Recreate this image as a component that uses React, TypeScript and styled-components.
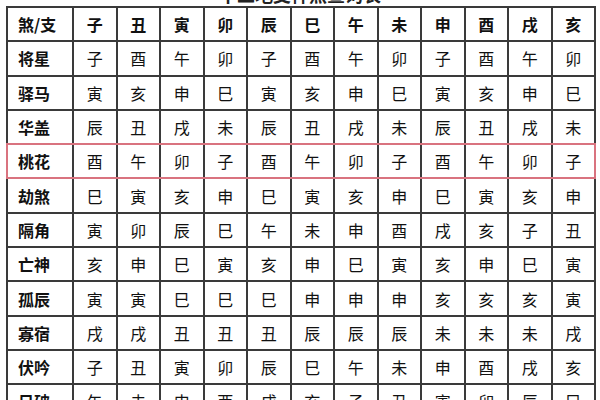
import styled, { createGlobalStyle } from "styled-components";

const branches = ["子", "丑", "寅", "卯", "辰", "巳", "午", "未", "申", "酉", "戌", "亥"];

interface ShaRow {
  name: string;
  values: string;
  highlight?: boolean;
}

const rows: ShaRow[] = [
  { name: "将星", values: "子酉午卯子酉午卯子酉午卯" },
  { name: "驿马", values: "寅亥申巳寅亥申巳寅亥申巳" },
  { name: "华盖", values: "辰丑戌未辰丑戌未辰丑戌未" },
  { name: "桃花", values: "酉午卯子酉午卯子酉午卯子", highlight: true },
  { name: "劫煞", values: "巳寅亥申巳寅亥申巳寅亥申" },
  { name: "隔角", values: "寅卯辰巳午未申酉戌亥子丑" },
  { name: "亡神", values: "亥申巳寅亥申巳寅亥申巳寅" },
  { name: "孤辰", values: "寅寅巳巳巳申申申亥亥亥寅" },
  { name: "寡宿", values: "戌戌丑丑丑辰辰辰未未未戌" },
  { name: "伏吟", values: "子丑寅卯辰巳午未申酉戌亥" },
  { name: "日破", values: "午未申酉戌亥子丑寅卯辰巳" },
];

const GlobalStyle = createGlobalStyle`
  html, body {
    margin: 0;
    padding: 0;
    background: #ffffff;
    overflow: hidden;
  }
  body {
    font-family: "Noto Sans CJK SC", "Noto Sans", sans-serif;
    color: #111111;
  }
`;

const Page = styled.div`
  width: 600px;
  height: 400px;
  overflow: hidden;
`;

/* only the lower edge of the caption is left in the crop */
const Title = styled.h1`
  margin: -15px 0 0;
  height: 18px;
  font-size: 18px;
  line-height: 18px;
  font-weight: 700;
  text-align: center;
  color: #222222;
`;

const Table = styled.div`
  margin: 3px 0 0 6px;
  width: 588px;
  border-top: 2px solid #3a3a3a;
  border-left: 2px solid #3a3a3a;
`;

const Row = styled.div<{ $highlight?: boolean }>`
  display: grid;
  grid-template-columns: 66px repeat(12, 1fr);
  height: 34.3px;
  position: relative;

  ${(p) =>
    p.$highlight &&
    `
    &::after {
      content: "";
      position: absolute;
      left: -2px;
      right: 0;
      top: -2px;
      bottom: 0;
      border: 2px solid #d9737f;
      pointer-events: none;
    }
  `}
`;

const Cell = styled.div<{ $label?: boolean; $bold?: boolean }>`
  box-sizing: border-box;
  display: flex;
  align-items: center;
  justify-content: ${(p) => (p.$label ? "flex-start" : "center")};
  padding-left: ${(p) => (p.$label ? "10px" : "0")};
  border-right: 2px solid #3a3a3a;
  border-bottom: 2px solid #3a3a3a;
  font-size: 16px;
  font-weight: ${(p) => (p.$bold ? 700 : 400)};
  line-height: 1;
  color: #111111;
`;

export default function App() {
  return (
    <Page>
      <GlobalStyle />
      <Title>十二地支神煞查询表</Title>
      <Table>
        <Row>
          <Cell $label $bold>
            煞/支
          </Cell>
          {branches.map((b) => (
            <Cell key={b} $bold>
              {b}
            </Cell>
          ))}
        </Row>
        {rows.map((r) => (
          <Row key={r.name} $highlight={r.highlight}>
            <Cell $label $bold>
              {r.name}
            </Cell>
            {r.values.split("").map((v, i) => (
              <Cell key={i}>{v}</Cell>
            ))}
          </Row>
        ))}
      </Table>
    </Page>
  );
}
